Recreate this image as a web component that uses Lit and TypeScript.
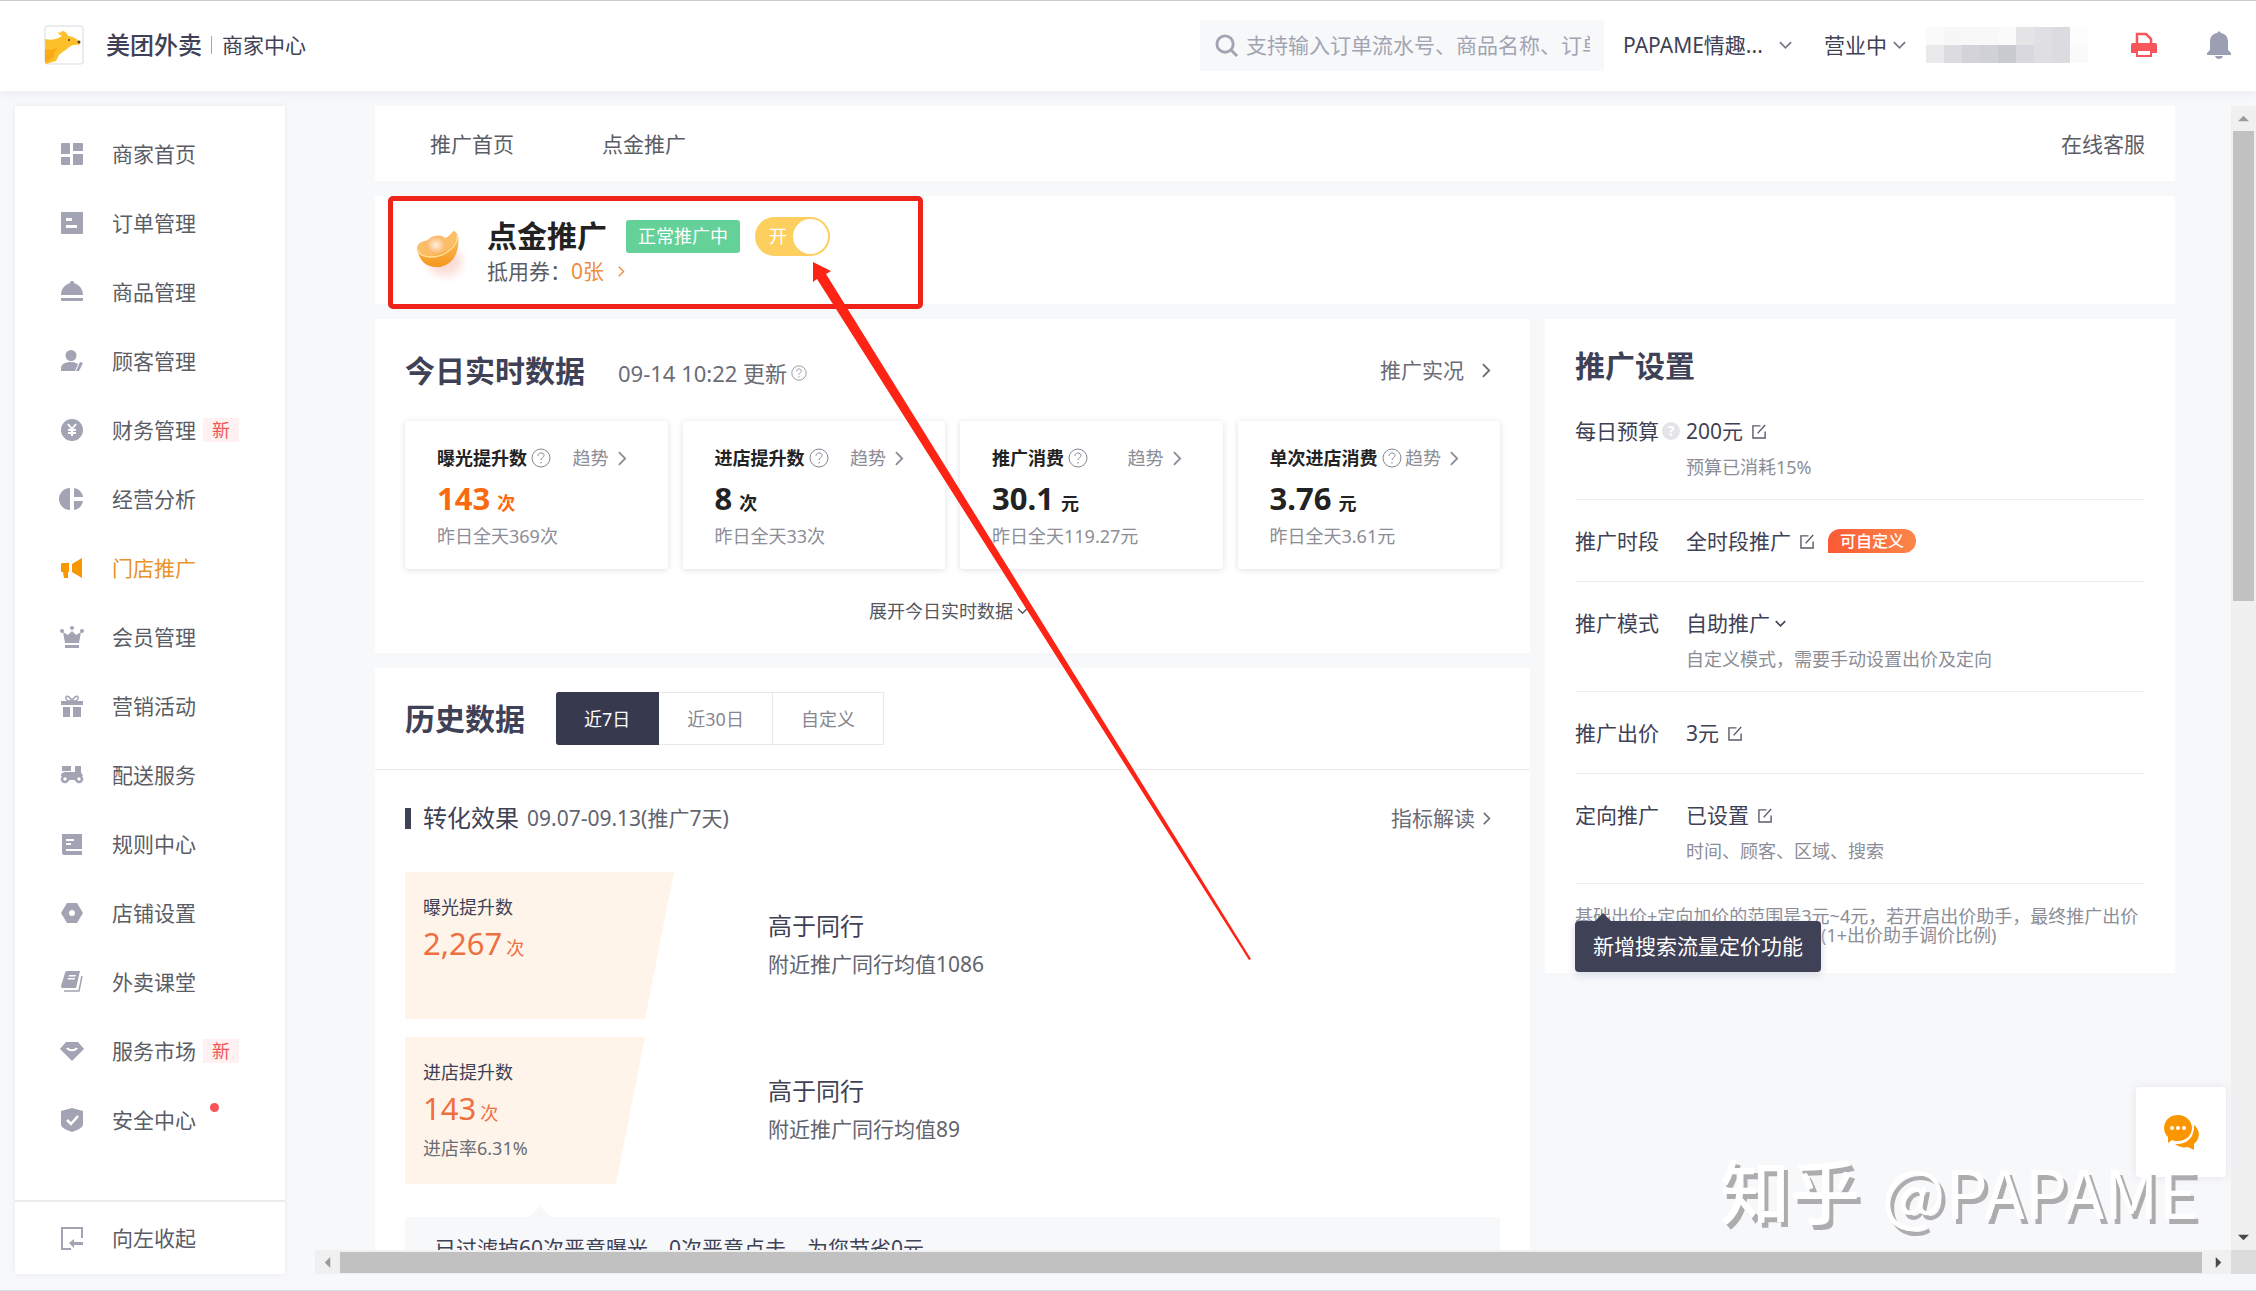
import { LitElement, html, css, svg, nothing, TemplateResult } from "lit";
import { customElement } from "lit/decorators.js";
import { classMap } from "lit/directives/class-map.js";

type Shape = ReturnType<typeof svg>;

const icons: Record<string, Shape> = {
  home: svg`<path d="M1 0h7a1 1 0 0 1 1 1v10H0V1a1 1 0 0 1 1-1zM12 0h9a1 1 0 0 1 1 1v7H12zM0 14h9v8H1a1 1 0 0 1-1-1zM12 11h10v10a1 1 0 0 1-1 1h-9z"/>`,
  order: svg`<path fill-rule="evenodd" d="M1 0h20a1 1 0 0 1 1 1v20a1 1 0 0 1-1 1H1a1 1 0 0 1-1-1V1a1 1 0 0 1 1-1zM5 6v3h6V6zM5 13v3h11v-3z"/>`,
  dish: svg`<path d="M11 0a2 2 0 0 1 2 2.300C18 3.500 22 8 22 14H0C0 8 4 3.500 9 2.300A2 2 0 0 1 11 0zM0 17h22v2a1 1 0 0 1-1 1H1a1 1 0 0 1-1-1z"/>`,
  person: svg`<circle cx="10" cy="5.500" r="5.500"/><path d="M10 12c3 0 5 .7 7 2l-3 7H0v-3c0-4 5-6 10-6zM19 12l3 1-4 8h-3z"/>`,
  money: svg`<circle cx="11" cy="11" r="11"/><path d="M7 5l4 5 4-5M11 10v7M7 11h8M7 14h8" fill="none" stroke="#fff" stroke-width="2"/>`,
  pie: svg`<path d="M9 0v22A11 11 0 0 1 9 0zM13 0a11 11 0 0 1 9 9h-9zM22 13a11 11 0 0 1-9 9v-9z"/>`,
  horn: svg`<path d="M21 1v20L11 15V7zM1 6h7v9H7v6H3l-1-6H1a1 1 0 0 1-1-1V7a1 1 0 0 1 1-1z"/>`,
  crown: svg`<path d="M2 6l5 3 4-4 4 4 5-3-2 11H4zM4 19h14v3H4z"/><circle cx="1" cy="5" r="2"/><circle cx="11" cy="2" r="2"/><circle cx="21" cy="5" r="2"/>`,
  gift: svg`<path d="M0 6h22v4H0zM2 12h7v10H2zM12 12h8v10h-8z"/><path d="M11 6C8 0 4 0 5 4c1 2 4 2 6 2 2 0 5 0 6-2 1-4-3-4-6 2z" fill="none" stroke="currentColor" stroke-width="1.500"/>`,
  scooter: svg`<path d="M1 2h9v5H1zM14 2h6v6l2 4H0c0-3 2-4 5-4h9zM7 11h8v5H7z"/><circle cx="4" cy="15" r="3" fill="#fff" stroke="currentColor" stroke-width="2.500"/><circle cx="18" cy="15" r="3" fill="#fff" stroke="currentColor" stroke-width="2.500"/>`,
  rules: svg`<path fill-rule="evenodd" d="M1 1h20v15H5v2h16v4H3a2 2 0 0 1-2-2zM5 6v2h8V6zM5 10v2h5v-2z"/>`,
  hex: svg`<path fill-rule="evenodd" d="M6 1h10l6 10-6 10H6L0 11zM11 8a3 3 0 1 0 0 6 3 3 0 0 0 0-6z"/>`,
  book: svg`<path fill-rule="evenodd" d="M6 0h13l-4 17H1a2 2 0 0 1-1-2L4 2c0-1 1-2 2-2zM8 4l-.5 1.500h7L15 4zM7 7l-.5 1.500h7L14 7z"/><path d="M21 5l-3 15H3" fill="none" stroke="currentColor" stroke-width="1.500"/>`,
  gem: svg`<path d="M5 2h12l6 7-12 12L-1 9z"/><path d="M6 8c2 3 8 3 10 0" fill="none" stroke="#fff" stroke-width="2"/>`,
  shield: svg`<path d="M11-1l11 3v13c0 4-6 6-11 8-5-2-11-4-11-8V2z"/><path d="M6 11l4 4 7-8" fill="none" stroke="#fff" stroke-width="2.500"/>`,
  collapse: svg`<path d="M21 11V1H1v21h9" fill="none" stroke="currentColor" stroke-width="2"/><path d="M8 16l5-4v3h9v3h-9v3z"/>`,
};

const menu: { icon: string; label: string; isNew?: boolean; dot?: boolean; active?: boolean }[] = [
  { icon: "home", label: "商家首页" },
  { icon: "order", label: "订单管理" },
  { icon: "dish", label: "商品管理" },
  { icon: "person", label: "顾客管理" },
  { icon: "money", label: "财务管理", isNew: true },
  { icon: "pie", label: "经营分析" },
  { icon: "horn", label: "门店推广", active: true },
  { icon: "crown", label: "会员管理" },
  { icon: "gift", label: "营销活动" },
  { icon: "scooter", label: "配送服务" },
  { icon: "rules", label: "规则中心" },
  { icon: "hex", label: "店铺设置" },
  { icon: "book", label: "外卖课堂" },
  { icon: "gem", label: "服务市场", isNew: true },
  { icon: "shield", label: "安全中心", dot: true },
];

const stats = [
  { name: "曝光提升数", value: "143", unit: "次", note: "昨日全天369次", hot: true },
  { name: "进店提升数", value: "8", unit: "次", note: "昨日全天33次" },
  { name: "推广消费", value: "30.1", unit: "元", note: "昨日全天119.27元" },
  { name: "单次进店消费", value: "3.76", unit: "元", note: "昨日全天3.61元" },
];

const mosaic = [
  "#fafafa", "#f7f7f8", "#f8f8f9", "#f8f8f9", "#fafafa", "#e5e5e8", "#e0e0e4", "#dcdce0", "#fdfdfd",
  "#eaeaec", "#dcdce0", "#d3d3d9", "#d0d0d7", "#c9c9d0", "#d8d8de", "#dfdfe3", "#dcdce0", "#fafafa",
];

const glyph = (name: string) =>
  html`<svg class="glyph" viewBox="0 0 22 22" aria-hidden="true">${icons[name]}</svg>`;

const right = html`<svg class="right" viewBox="0 0 10 16" aria-hidden="true"><path d="M1 1l7 7-7 7" /></svg>`;
const down = html`<svg class="down" viewBox="0 0 14 8" aria-hidden="true"><path d="M1 1l6 6 6-6" /></svg>`;
const help = html`<svg class="help" viewBox="0 0 20 20" aria-hidden="true">
  <circle cx="10" cy="10" r="9" /><path d="M7 8c0-4 6-4 6-.5 0 2-3 2.200-3 4.500M10 14v1.500" />
</svg>`;
const edit = html`<button class="plain" aria-label="编辑">
  <svg class="edit" viewBox="0 0 16 16" aria-hidden="true"><path d="M9 2H1v13h13V8M14 1L6 10" /></svg>
</button>`;

@customElement("app-root")
export class AppRoot extends LitElement {
  static styles = css`
    :host {
      display: flex;
      flex-direction: column;
      position: relative;
      height: 100vh;
      box-sizing: border-box;
      overflow: hidden;
      background: #f7f8fa;
      border-top: 1px solid #cccccf;
      border-bottom: 1px solid #cfdfea;
      color: #3f4156;
      font-family: "Noto Sans", "Noto Sans CJK SC", sans-serif;
      font-size: 21px;
      font-weight: 400;
      line-height: 30px;
    }
    * { box-sizing: border-box; }
    h1, h2, h3, p, ul { margin: 0; padding: 0; }
    h2 { font-size: 30px; line-height: 40px; font-weight: 700; white-space: nowrap; }
    ul { list-style: none; }
    a { color: inherit; text-decoration: none; white-space: nowrap; }
    svg { display: block; flex: none; overflow: visible; }
    button, select, input {
      font: inherit; color: inherit; border: 0; padding: 0; margin: 0;
      background: none; appearance: none; outline: none;
    }
    .right, .down, .help, .edit { fill: none; stroke: currentColor; stroke-width: 2; }
    .right { width: 9px; height: 15px; }
    .down { width: 13px; height: 8px; }
    .help { width: 20px; height: 20px; stroke-width: 1; color: #85868f; }
    .edit { width: 15px; height: 15px; stroke-width: 1.5; color: #5a5c68; }
    .plain { display: flex; }
    .glyph { width: 22px; height: 22px; fill: currentColor; }

    .top {
      display: flex; align-items: center; height: 90px; flex: none;
      padding: 0 25px 2px 44px; background: #fff; box-shadow: 0 3px 8px #ededf4;
    }
    .logo { width: 40px; height: 40px; }
    .brand { font-size: 24px; font-weight: 500; margin-left: 22px; white-space: nowrap; }
    .product { font-size: 21px; margin-left: 9px; padding-left: 10px; line-height: 18px; border-left: 1px solid #a5a6b0; white-space: nowrap; }
    .search {
      display: flex; align-items: center; gap: 8px; width: 404px; height: 51px;
      margin-left: auto; padding: 0 14px 0 15px; background: #f7f8fa;
    }
    .search svg { width: 23px; height: 23px; }
    .search input { flex: 1; min-width: 0; height: 30px; }
    .search input::placeholder { color: #a2a4b3; opacity: 1; }
    .pick { display: flex; align-items: center; gap: 8px; }
    .pick .down { color: #777985; }
    .shop { margin-left: 19px; }
    .shop select { width: 148px; }
    .open { margin-left: 32px; gap: 5px; }
    .open select { width: 64px; }
    .mosaic { display: grid; grid-template-columns: repeat(9, 18px); grid-auto-rows: 18px; margin: 0 43px 0 20px; }
    .printer { width: 26px; height: 26px; }
    .bell { width: 24px; height: 28px; margin-left: 50px; }

    .body { display: flex; flex: 1; min-height: 0; gap: 30px; padding: 15px 0 16px 15px; }
    .side {
      display: flex; flex-direction: column; width: 270px; flex: none;
      background: #fff; box-shadow: 0 0 6px #e9eaf0; color: #5b5d66;
    }
    .menu { flex: 1; min-height: 0; padding-top: 13px; }
    .item { display: flex; align-items: center; height: 69px; padding-left: 46px; }
    .item .glyph { color: #a2a3b3; margin-right: 29px; }
    .item.active, .item.active .glyph { color: #f89800; }
    .item.active { color: #ea922c; }
    .new { margin-left: 7px; padding: 0 9px; font-size: 18px; line-height: 24px; background: #fff1f1; color: #f0565a; }
    .dot { width: 9px; height: 9px; border-radius: 50%; background: #f8535a; margin: 0 0 24px 14px; }
    .fold { width: 100%; height: 74px; border-top: 2px solid #ececf0; }

    .pane { display: grid; grid-template: 1fr 24px / 1fr 25px; flex: 1; min-width: 0; }
    .view { overflow: hidden; min-height: 0; }
    .page { position: relative; display: flex; flex-direction: column; gap: 15px; padding: 0 56px 0 60px; }
    .card { background: #fff; }
    .tabs { display: flex; align-items: center; gap: 88px; height: 75px; padding: 0 30px 0 55px; color: #5b5d66; }
    .tabs .service { margin-left: auto; }

    .promo { position: relative; display: flex; align-items: flex-start; height: 108px; padding: 20px 42px; }
    .ingot { width: 44px; height: 48px; margin: 16px 26px 0 0; }
    .promo-line { display: flex; align-items: center; gap: 15px; }
    .promo h2 { color: #222; margin-right: 4px; }
    .state { padding: 0 12px; font-size: 18px; line-height: 33px; border-radius: 3px; background: #64d199; color: #fff; }
    .switch { display: flex; align-items: center; justify-content: space-between; width: 75px; height: 39px; padding: 0 2px 0 14px; border-radius: 20px; background: #fccf5f; color: #fff; font-size: 18px; }
    .knob { width: 35px; height: 35px; border-radius: 50%; background: #fff; }
    .coupon { display: flex; align-items: center; color: #5b5d66; }
    .coupon a { display: flex; align-items: center; gap: 14px; color: #ee8d3a; }
    .coupon .right { width: 7px; height: 11px; }
    .frame { position: absolute; left: 13px; top: 0; width: 535px; height: 113px; border: 5px solid #ef2318; border-radius: 5px; z-index: 2; }

    .cols { display: grid; grid-template-columns: minmax(0, 1fr) 630px; gap: 15px; align-items: start; }
    .left { display: flex; flex-direction: column; gap: 15px; }
    .today { padding: 0 30px; }
    .head { display: flex; align-items: baseline; height: 102px; padding-top: 32px; }
    .time { display: flex; align-items: center; gap: 4px; margin-left: 33px; color: #6a6c76; font-size: 22px; }
    .time .help { width: 16px; height: 16px; }
    .more { display: flex; align-items: center; gap: 18px; margin-left: auto; margin-right: 9px; color: #6a6c76; }
    .head .more { align-self: flex-start; line-height: 38px; }
    .stats { display: grid; grid-template-columns: repeat(4, minmax(0, 1fr)); gap: 15px; }
    .stat { padding: 25px 41px 21px 32px; border-radius: 3px; box-shadow: 0 1px 6px #dfdfe4; font-size: 18px; line-height: 24px; }
    .stat-head { display: flex; align-items: center; white-space: nowrap; }
    .stat-head h3 { font-size: 18px; font-weight: 700; color: #222; margin-right: 4px; }
    .trend { display: flex; align-items: center; gap: 9px; margin-left: auto; color: #8c8d96; }
    .value { margin: 8px 0 6px; line-height: 24px; font-weight: 700; color: #222; }
    .value b { font-size: 31px; font-weight: 700; line-height: 40px; margin-right: 7px; }
    .value.hot { color: #f96a0e; }
    .note { color: #8c8d96; }
    .expand { display: flex; align-items: center; gap: 4px; height: 84px; margin: 0 auto; padding-right: 8px; font-size: 18px; color: #55575f; }
    .expand .down { width: 11px; height: 6px; }

    .history-head { display: flex; align-items: center; gap: 31px; height: 102px; padding: 0 30px; border-bottom: 1px solid #e8e9ec; }
    .range { display: flex; font-size: 18px; color: #85868f; }
    .range button { height: 53px; padding: 0 28px; border: 1px solid #e8e9ec; border-left: 0; }
    .range .on { background: #37394e; border-color: #37394e; color: #fff; border-radius: 3px 0 0 3px; }
    .history { padding: 0 30px; }
    .sub-head { display: flex; align-items: center; height: 96px; margin-bottom: 6px; }
    .sub-head h3 { display: flex; align-items: center; gap: 12px; font-size: 24px; font-weight: inherit; }
    .sub-head h3::before { content: ""; width: 6px; height: 21px; background: #3f4156; }
    .period { margin-left: 8px; color: #62646e; }
    .sub-head .more { gap: 8px; }
    .sub-head .right { height: 13px; width: 8px; }
    .funnel { display: flex; height: 147px; margin-bottom: 18px; }
    .step { width: 363px; flex: none; padding: 23px 18px 0; font-size: 18px; line-height: 24px; background: #fff4e9; }
    .one { clip-path: polygon(0 0, 269px 0, 240px 100%, 0 100%); }
    .two { clip-path: polygon(0 0, 240px 0, 211px 100%, 0 100%); }
    .count { margin: 4px 0 8px; color: #ee6f3f; }
    .count span { font-size: 31px; line-height: 40px; margin-right: 4px; }
    .rate { color: #6a6c76; }
    .peer { padding-top: 39px; color: #62646e; }
    .peer h3 { font-size: 24px; font-weight: inherit; color: #3f4156; margin-bottom: 8px; }
    .tip { position: relative; margin-top: 33px; padding: 16px 30px; border-radius: 3px; background: #f7f8fa; }
    .tip::before { content: ""; position: absolute; left: 124px; top: -11px; border: 11px solid transparent; border-top: 0; border-bottom-color: #f7f8fa; }

    .settings { padding: 27px 30px 28px; }
    .settings h2 { margin-bottom: 4px; }
    .row { display: grid; grid-template-columns: 111px 1fr; padding: 26px 0 25px; border-bottom: 1px solid #ececf0; }
    .row.wide { padding-bottom: 20px; }
    .name { display: flex; align-items: center; gap: 3px; }
    .q { width: 18px; height: 18px; border-radius: 50%; background: #e4e4e7; color: #fff; font-size: 14px; line-height: 18px; text-align: center; font-weight: 700; }
    .val { display: flex; align-items: center; gap: 9px; }
    .badge { margin-left: 4px; padding: 0 12px; border-radius: 12px 12px 12px 0; background: linear-gradient(90deg, #fa5a35, #fb8648); color: #fff; font-size: 16px; font-weight: 500; line-height: 24px; }
    .mode { gap: 4px; }
    .mode select { width: 85px; }
    .mode .down { width: 11px; height: 7px; }
    .desc { grid-column: 2; margin-top: 9px; font-size: 18px; line-height: 24px; color: #8c8d96; }
    .rule { position: relative; padding-top: 23px; font-size: 18px; line-height: 19px; color: #8c8d96; white-space: nowrap; }
    .rule p + p { margin-left: 246px; }
    .bubble { position: absolute; left: 0; top: 37px; padding: 0 18px; border-radius: 4px; background: #3f4156; box-shadow: 0 3px 8px #d5d9e6; color: #fff; font-size: 21px; line-height: 51px; }
    .bubble::before { content: ""; position: absolute; left: 20px; top: -8px; border: 8px solid transparent; border-top: 0; border-bottom-color: #3f4156; }
    .pointer { position: absolute; left: 498px; top: 156px; width: 437px; height: 698px; fill: #fd2315; pointer-events: none; z-index: 3; }

    .vbar, .hbar { display: flex; align-items: center; background: #f0f0f1; }
    .vbar { flex-direction: column; }
    .arrow { display: flex; align-items: center; justify-content: center; width: 25px; height: 25px; flex: none; }
    .arrow svg { width: 11px; height: 11px; fill: #4a4a4a; }
    .arrow.dim svg { fill: #9a9a9a; }
    .track { flex: 1; display: flex; align-self: stretch; justify-content: flex-start; }
    .vbar .track { padding: 0 2px; }
    .hbar .track { padding: 2px 0 1px; }
    .vthumb { width: 100%; height: 43%; background: #c1c1c1; }
    .hthumb { width: 100%; background: #c1c1c1; margin-right: 4px; }
    .corner { background: #dcdcdc; }
    .chat { position: absolute; right: 30px; bottom: 113px; display: flex; align-items: center; justify-content: center; width: 90px; height: 90px; background: #fff; box-shadow: 0 0 10px #e3e4ea; border-radius: 3px; }
    .chat svg { width: 35px; height: 35px; }
    .mark { position: absolute; right: 58px; bottom: 58px; display: flex; align-items: baseline; gap: 22px; color: #fff; font-family: "Noto Sans CJK SC", sans-serif; font-size: 67px; font-weight: 400; line-height: 84px; text-shadow: 4px 5px 0 #adadaf; pointer-events: none; z-index: 4; }
    .zh { font-size: 70px; font-weight: 500; }
  `;

  private menuItem(m: (typeof menu)[number]): TemplateResult {
    return html`<li>
      <a href="#" class=${classMap({ item: true, active: !!m.active })}>
        ${glyph(m.icon)}<span>${m.label}</span>
        ${m.isNew ? html`<span class="new">新</span>` : nothing}
        ${m.dot ? html`<span class="dot"></span>` : nothing}
      </a>
    </li>`;
  }

  private stat(s: (typeof stats)[number]): TemplateResult {
    return html`<article class="stat">
      <div class="stat-head">
        <h3>${s.name}</h3>${help}
        <a class="trend" href="#">趋势 ${right}</a>
      </div>
      <p class=${classMap({ value: true, hot: !!s.hot })}><b>${s.value}</b>${s.unit}</p>
      <p class="note">${s.note}</p>
    </article>`;
  }

  private header(): TemplateResult {
    return html`<header class="top">
      <svg class="logo" viewBox="0 0 40 40" aria-hidden="true">
        <rect x="1" y="1" width="38" height="38" rx="3" fill="#fff" stroke="#e6e6ec" stroke-width="1.500" />
        <path d="M1 14c6 2 12 0 17-3-3-1-4-3-4-4 2 1 3 1 4-1 3 0 5 2 6 5 4 0 9 3 12 6l-1 3c-6-1-9 1-12 4-3 2-6 4-8 6l-3 6-10 3z" fill="#fbc02a" />
        <path d="M1 24c4 2 8 1 13-2-3 5-5 7-4 10l-9 6z" fill="#f9aa14" />
        <circle cx="25" cy="15" r="1" fill="#5a3b10" /><circle cx="35" cy="17" r="1.500" fill="#5a3b10" />
      </svg>
      <span class="brand">美团外卖</span><span class="product">商家中心</span>
      <label class="search">
        <svg viewBox="0 0 24 24" fill="none" stroke="#a2a4b3" stroke-width="3" aria-hidden="true"><circle cx="10.500" cy="10.500" r="8.500" /><path d="M17 17l6 6" /></svg>
        <input type="text" aria-label="搜索" placeholder="支持输入订单流水号、商品名称、订单" />
      </label>
      <label class="pick shop"><select aria-label="门店"><option>PAPAME情趣...</option></select>${down}</label>
      <label class="pick open"><select aria-label="营业状态"><option>营业中</option></select>${down}</label>
      <div class="mosaic">${mosaic.map((c) => html`<i style="background:${c}"></i>`)}</div>
      <button class="plain" aria-label="打印">
        <svg class="printer" viewBox="0 0 26 26" aria-hidden="true">
          <path d="M6 12V2h9l5 5v5" fill="none" stroke="#f8565a" stroke-width="2.500" />
          <path d="M2 11h22a2 2 0 0 1 2 2v8H0v-8a2 2 0 0 1 2-2z" fill="#f8565a" />
          <path d="M6 18h14v6H6z" fill="#fff" stroke="#f8565a" stroke-width="2" />
        </svg>
      </button>
      <button class="plain" aria-label="通知">
        <svg class="bell" viewBox="0 0 24 28" fill="#9c9eb3" aria-hidden="true">
          <path d="M12 0l2 2c5 1 7 4 7 9v8l3 3v2H0v-2l3-3v-8c0-5 2-8 7-9zM8 25h8c-1 4-7 4-8 0z" />
        </svg>
      </button>
    </header>`;
  }

  private settings(): TemplateResult {
    return html`<section class="card settings">
      <h2>推广设置</h2>
      <div class="row wide">
        <div class="name">每日预算<span class="q">?</span></div>
        <div class="val">200元 ${edit}</div>
        <p class="desc">预算已消耗15%</p>
      </div>
      <div class="row">
        <div class="name">推广时段</div>
        <div class="val">全时段推广 ${edit}<span class="badge">可自定义</span></div>
      </div>
      <div class="row wide">
        <label class="name" for="mode">推广模式</label>
        <div class="val mode"><select id="mode"><option>自助推广</option></select>${down}</div>
        <p class="desc">自定义模式，需要手动设置出价及定向</p>
      </div>
      <div class="row">
        <div class="name">推广出价</div>
        <div class="val">3元 ${edit}</div>
      </div>
      <div class="row wide">
        <div class="name">定向推广</div>
        <div class="val">已设置 ${edit}</div>
        <p class="desc">时间、顾客、区域、搜索</p>
      </div>
      <div class="rule">
        <p>基础出价+定向加价的范围是3元~4元，若开启出价助手，最终推广出价</p>
        <p>(1+出价助手调价比例)</p>
        <div class="bubble">新增搜索流量定价功能</div>
      </div>
    </section>`;
  }

  render() {
    return html`
      ${this.header()}
      <div class="body">
        <nav class="side">
          <ul class="menu">${menu.map((m) => this.menuItem(m))}</ul>
          <button class="item fold">${glyph("collapse")}向左收起</button>
        </nav>
        <div class="pane">
          <main class="view">
            <div class="page">
              <nav class="card tabs">
                <a href="#">推广首页</a><a href="#">点金推广</a><a class="service" href="#">在线客服</a>
              </nav>
              <section class="card promo">
                <svg class="ingot" viewBox="0 0 44 48" aria-hidden="true">
                  <defs>
                    <linearGradient id="gold" x1="0" y1="0" x2="0" y2="1"><stop offset="0" stop-color="#fdc565" /><stop offset="1" stop-color="#f5961e" /></linearGradient>
                    <radialGradient id="shine"><stop offset="0" stop-color="#fff0e2" /><stop offset="1" stop-color="#fbb562" /></radialGradient>
                    <filter id="soft" x="-50%" y="-50%" width="200%" height="200%"><feGaussianBlur stdDeviation="4" /></filter>
                  </defs>
                  <ellipse cx="28" cy="30" rx="17" ry="14" fill="#fbdcd6" filter="url(#soft)" />
                  <path d="M0 16c4 3 10 4 20 1S36 7 37-1c5 3 5 8 4 16-2 11-8 18-18 20C10 36 2 30 0 16z" fill="url(#gold)" />
                  <path d="M0 16C1 9 8 9 12 8c4-5 12-6 16-2 4-1 6-5 9-7 4 3 4 9-1 14C28 23 4 30 0 16z" fill="#fbbd66" />
                  <ellipse cx="19" cy="13" rx="10" ry="9" fill="url(#shine)" />
                  <path d="M0 17c4 11 22 10 33 1 6-5 8-11 7-15" fill="none" stroke="#ffe09a" stroke-width="1.500" />
                </svg>
                <div>
                  <div class="promo-line">
                    <h2>点金推广</h2>
                    <span class="state">正常推广中</span>
                    <button class="switch" role="switch" aria-checked="true">开<span class="knob"></span></button>
                  </div>
                  <p class="coupon">抵用券：<a href="#">0张 ${right}</a></p>
                </div>
                <div class="frame"></div>
              </section>
              <div class="cols">
                <div class="left">
                  <section class="card today">
                    <div class="head">
                      <h2>今日实时数据</h2>
                      <span class="time">09-14 10:22 更新${help}</span>
                      <a class="more" href="#">推广实况 ${right}</a>
                    </div>
                    <div class="stats">${stats.map((s) => this.stat(s))}</div>
                    <button class="expand">展开今日实时数据 ${down}</button>
                  </section>
                  <section class="card">
                    <div class="history-head">
                      <h2>历史数据</h2>
                      <div class="range">
                        <button class="on">近7日</button><button>近30日</button><button>自定义</button>
                      </div>
                    </div>
                    <div class="history">
                      <div class="sub-head">
                        <h3>转化效果</h3>
                        <span class="period">09.07-09.13(推广7天)</span>
                        <a class="more" href="#">指标解读 ${right}</a>
                      </div>
                      <div class="funnel">
                        <div class="step one">
                          <p>曝光提升数</p>
                          <p class="count"><span>2,267</span>次</p>
                        </div>
                        <div class="peer"><h3>高于同行</h3><p>附近推广同行均值1086</p></div>
                      </div>
                      <div class="funnel">
                        <div class="step two">
                          <p>进店提升数</p>
                          <p class="count"><span>143</span>次</p>
                          <p class="rate">进店率6.31%</p>
                        </div>
                        <div class="peer"><h3>高于同行</h3><p>附近推广同行均值89</p></div>
                      </div>
                      <div class="tip">已过滤掉60次恶意曝光，0次恶意点击，为您节省0元</div>
                    </div>
                  </section>
                </div>
                ${this.settings()}
              </div>
              <svg class="pointer" viewBox="0 0 437 698" aria-hidden="true"><path d="M0 0l18 9-5 3 425 685-2 1L4 17l-4 3z" /></svg>
            </div>
          </main>
          <div class="vbar">
            <span class="arrow dim"><svg viewBox="0 0 12 12"><path d="M0 9h12L6 3z" /></svg></span>
            <div class="track"><div class="vthumb"></div></div>
            <span class="arrow"><svg viewBox="0 0 12 12"><path d="M0 3h12L6 9z" /></svg></span>
          </div>
          <div class="hbar">
            <span class="arrow dim"><svg viewBox="0 0 12 12"><path d="M9 0v12L3 6z" /></svg></span>
            <div class="track"><div class="hthumb"></div></div>
            <span class="arrow"><svg viewBox="0 0 12 12"><path d="M3 0v12l6-6z" /></svg></span>
          </div>
          <div class="corner"></div>
        </div>
      </div>
      <button class="chat" aria-label="在线咨询">
        <svg viewBox="0 0 35 35" fill="#fb9600" aria-hidden="true">
          <path d="M30 10c7 6 6 14 0 19v6l-6-3c-5 1-9 0-13-3 11 1 20-6 19-19z" />
          <path d="M14 0c8 0 14 6 14 13s-6 13-14 13c-2 0-4 0-6-1l-4 3v-6C-4 14 1 0 14 0z" />
          <circle cx="8" cy="13" r="2" fill="#fff" /><circle cx="14" cy="13" r="2" fill="#fff" /><circle cx="20" cy="13" r="2" fill="#fff" />
        </svg>
      </button>
      <div class="mark"><span class="zh">知乎</span><span>@PAPAME</span></div>
    `;
  }
}
